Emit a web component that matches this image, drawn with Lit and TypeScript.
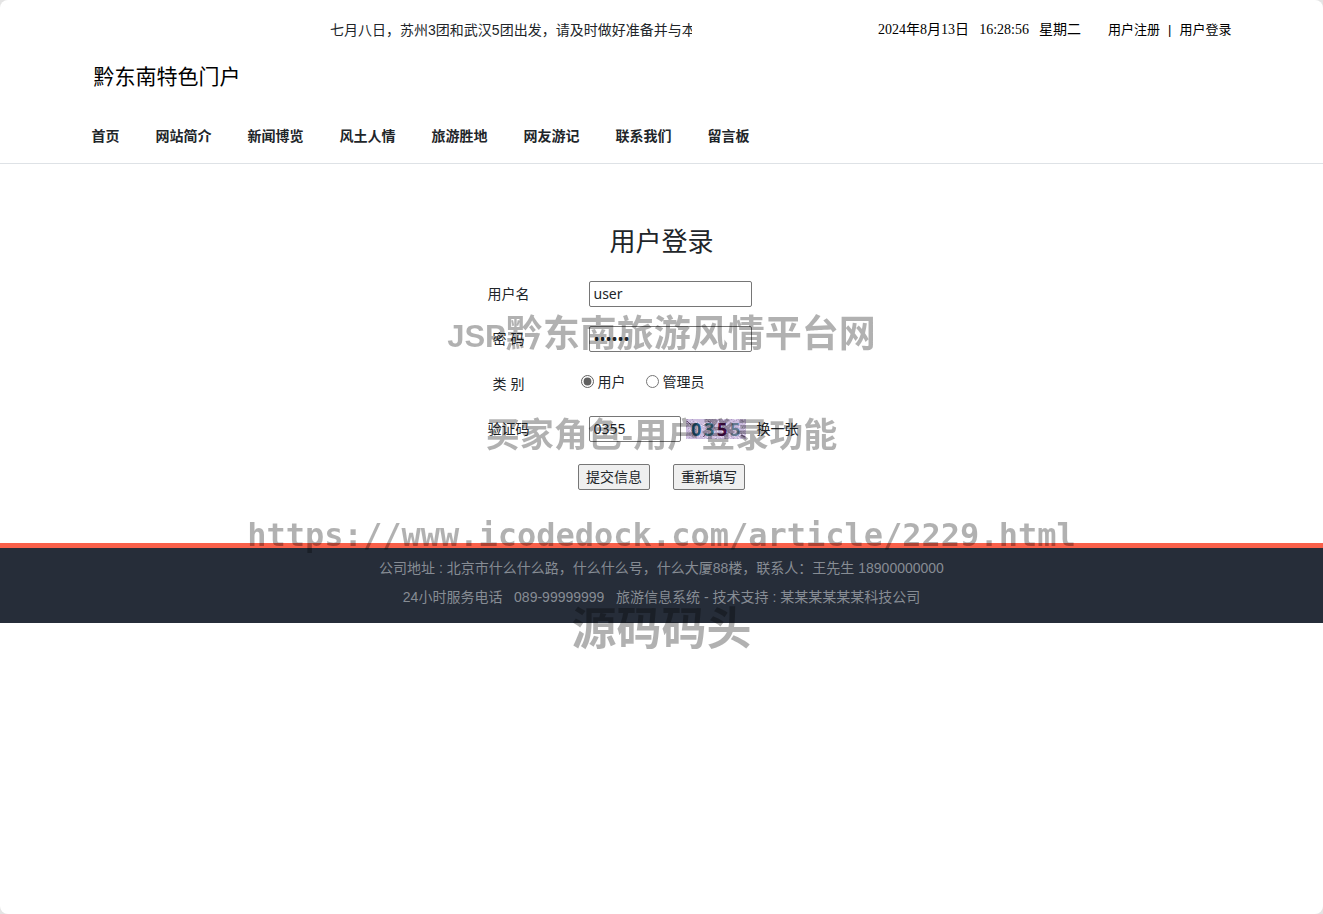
import { LitElement, html, css, svg } from "lit";
import { customElement, state } from "lit/decorators.js";

const NAV_ITEMS = ["首页", "网站简介", "新闻博览", "风土人情", "旅游胜地", "网友游记", "联系我们", "留言板"];

/** Captcha picture: noisy lavender ground with four coloured digits. */
@customElement("captcha-image")
class CaptchaImage extends LitElement {
  static styles = css`
    :host { display: block; }
    svg { display: block; width: 60px; height: 20px; }
    .digit { font: 700 18px "Noto Sans", sans-serif; }
  `;

  private noise() {
    const colors = ["#cbb6da", "#dfd4ec", "#bba9ce", "#d8c4e2", "#e8def2", "#c3b8dc", "#af9cc0"];
    let seed = 355;
    const next = () => (seed = (seed * 16807) % 2147483647) / 2147483647;
    return Array.from({ length: 600 }, () => {
      const x = Math.floor(next() * 60);
      const y = Math.floor(next() * 20);
      const fill = colors[Math.floor(next() * colors.length)];
      return svg`<rect x=${x} y=${y} width="1" height="1" fill=${fill}></rect>`;
    });
  }

  render() {
    return html`
      <svg viewBox="0 0 60 20" role="img" aria-label="验证码图片">
        <rect width="60" height="20" fill="#cbbcde"></rect>
        ${this.noise()}
        <path d="M1 2l4 4M17 18l3-3M22 2l3 2M55 16l4 2" stroke="#6c5078" stroke-width="1"></path>
        <text class="digit" x="5" y="17" fill="#1d5270">0</text>
        <text class="digit" x="18" y="17" fill="#3d6c80">3</text>
        <text class="digit" x="31" y="17" fill="#4c0c4c">5</text>
        <text class="digit" x="44" y="17" fill="#647a90">5</text>
      </svg>
    `;
  }
}

@customElement("app-root")
class AppRoot extends LitElement {
  @state() private role = "user";

  static styles = css`
    :host {
      display: block;
      background: #e4e4e4;
      color: #212529;
      font: 14px/20px "Liberation Sans", "Noto Sans CJK SC", sans-serif;
    }
    * { box-sizing: border-box; }
    a { color: inherit; text-decoration: none; }
    .page {
      position: relative;
      min-height: 100vh;
      background: #fff;
      border-radius: 8px;
      overflow: hidden;
    }
    .container { max-width: 1140px; margin: 0 auto; }
    .header { border-bottom: 1px solid #dee2e6; }
    .topbar {
      display: flex;
      align-items: center;
      justify-content: flex-end;
      height: 60px;
    }
    .notice { width: 362px; margin-right: 186px; overflow: hidden; white-space: nowrap; }
    .clock {
      display: flex;
      gap: 7px;
      margin-right: 27px;
      font-family: "Liberation Serif", "Noto Sans CJK SC", serif;
      color: #000;
    }
    .clock-time { width: 56px; text-align: center; }
    .account { display: flex; gap: 8px; font-size: 13px; color: #000; }
    .brand {
      display: block;
      padding: 0 2px;
      font-size: 21px;
      line-height: 34px;
      color: #000;
      font-weight: 400;
    }
    .nav { display: flex; gap: 36px; padding: 32px 0 17px; font-weight: 700; }
    .main { padding: 60px 16px 53px; }
    .title { margin: 0; font-size: 26px; line-height: 36px; font-weight: 400; text-align: center; }
    .login { max-width: 402px; margin: 11px auto 0; }
    .row {
      display: grid;
      grid-template-columns: 96px 1fr;
      column-gap: 24px;
      align-items: center;
      height: 45px;
    }
    .label { text-align: center; }
    .field { display: flex; align-items: center; }
    .field-choices { padding-bottom: 4px; }
    .box {
      width: 163px;
      height: 26px;
      margin: 0 0 0 8px;
      padding: 1px 4px;
      border: 1px solid #767676;
      border-radius: 2px;
      background: #fff;
      color: #212529;
      font: 14px/20px "Noto Sans", "Noto Sans CJK SC", sans-serif;
    }
    .box-short { width: 92px; margin-right: 5px; }
    .box-secret { font-size: 16px; }
    .choice { display: flex; align-items: center; gap: 4px; margin-right: 20px; }
    .radio { width: 13px; height: 13px; margin: 0; accent-color: #606060; filter: grayscale(1); }
    .swap { margin-left: 11px; }
    .actions { display: flex; justify-content: center; gap: 23px; padding-top: 13px; }
    .button {
      width: 72px;
      height: 26px;
      padding: 0;
      border: 1px solid #767676;
      border-radius: 2px;
      background: #efefef;
      color: #212529;
      font: inherit;
    }
    .footer {
      padding: 6px 16px 11px;
      border-top: 5px solid #f9604a;
      background: #262d39;
      color: #868c94;
      text-align: center;
      line-height: 29px;
    }
    .footer-line { margin: 0; white-space: pre-wrap; }
    .watermark {
      position: absolute;
      top: 285px;
      left: 0;
      right: 0;
      opacity: 0.3;
      color: #000;
      font-family: "Liberation Sans", "Noto Sans CJK SC", sans-serif;
      font-weight: 700;
      line-height: 100px;
      text-align: center;
      white-space: nowrap;
      pointer-events: none;
    }
    .mark { height: 100px; }
    .mark-title { font-size: 37px; }
    .mark-latin { font-size: 31px; }
    .mark-scene { font-size: 34px; }
    .mark-url { font-family: "DejaVu Sans Mono", monospace; font-size: 32px; }
    .mark-brand { font-size: 45px; line-height: 90px; }
  `;

  private pick(event: Event) {
    this.role = (event.target as HTMLInputElement).value;
  }

  render() {
    return html`
      <div class="page" lang="zh-CN">
        <header class="header">
          <div class="container">
            <div class="topbar">
              <div class="notice">七月八日，苏州3团和武汉5团出发，请及时做好准备并与本</div>
              <div class="clock">
                <span>2024年8月13日</span><span class="clock-time">16:28:56</span><span>星期二</span>
              </div>
              <div class="account">
                <a href="#register">用户注册</a><span>|</span><a href="#login">用户登录</a>
              </div>
            </div>
            <a class="brand" href="#home">黔东南特色门户</a>
            <nav class="nav">${NAV_ITEMS.map((item) => html`<a href="#">${item}</a>`)}</nav>
          </div>
        </header>

        <main class="main">
          <h1 class="title">用户登录</h1>
          <form class="login" @submit=${(e: Event) => e.preventDefault()}>
            <div class="row">
              <label class="label" for="username">用户名</label>
              <div class="field"><input class="box" id="username" type="text" value="user" /></div>
            </div>
            <div class="row">
              <label class="label" for="password">密 码</label>
              <div class="field"><input class="box box-secret" id="password" type="password" value="123456" /></div>
            </div>
            <div class="row" role="radiogroup" aria-labelledby="role-label">
              <span class="label" id="role-label">类 别</span>
              <div class="field field-choices">
                <label class="choice">
                  <input class="radio" type="radio" name="role" value="user"
                    .checked=${this.role === "user"} @change=${this.pick} />用户
                </label>
                <label class="choice">
                  <input class="radio" type="radio" name="role" value="admin"
                    .checked=${this.role === "admin"} @change=${this.pick} />管理员
                </label>
              </div>
            </div>
            <div class="row">
              <label class="label" for="code">验证码</label>
              <div class="field">
                <input class="box box-short" id="code" type="text" value="0355" />
                <captcha-image></captcha-image>
                <a class="swap" href="#captcha">换一张</a>
              </div>
            </div>
            <div class="actions">
              <button class="button" type="submit">提交信息</button>
              <button class="button" type="reset">重新填写</button>
            </div>
          </form>
        </main>

        <footer class="footer">
          <p class="footer-line">公司地址 : 北京市什么什么路，什么什么号，什么大厦88楼，联系人：王先生 18900000000</p>
          <p class="footer-line">24小时服务电话   089-99999999   旅游信息系统 - 技术支持 : 某某某某某某科技公司</p>
        </footer>

        <div class="watermark">
          <div class="mark mark-title"><span class="mark-latin">JSP</span>黔东南旅游风情平台网</div>
          <div class="mark mark-scene">买家角色-用户登录功能</div>
          <div class="mark mark-url">https://www.icodedock.com/article/2229.html</div>
          <div class="mark mark-brand">源码码头</div>
        </div>
      </div>
    `;
  }
}
